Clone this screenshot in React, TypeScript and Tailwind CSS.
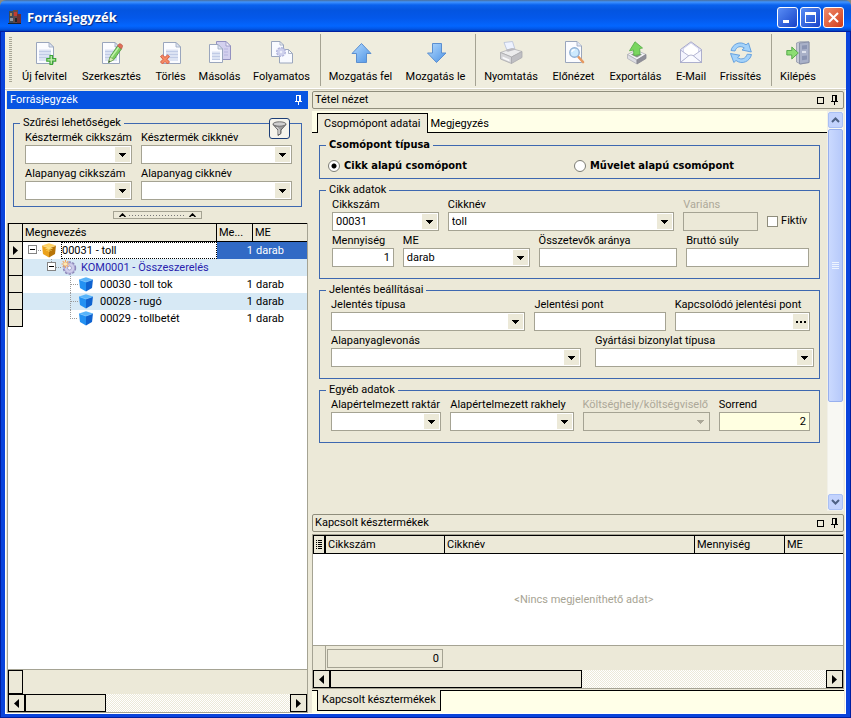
import { useId, type ReactNode } from "react";

/* ---------- small glyphs ---------- */

function PinIcon() {
  return (
    <svg width="7" height="10" viewBox="0 0 7 10" shapeRendering="crispEdges" aria-hidden="true">
      <path d="M1 0h5v6h1v1h-3v3h-1v-3h-3v-1h1zM2 1v5h2v-5z" fill="currentColor" fillRule="evenodd" />
    </svg>
  );
}

function SquareIcon() {
  return (
    <svg width="7" height="7" viewBox="0 0 7 7" shapeRendering="crispEdges" aria-hidden="true">
      <path d="M.5 .5h6v6h-6z" fill="none" stroke="currentColor" />
    </svg>
  );
}

function DownArrow() {
  return (
    <svg width="7" height="4" viewBox="0 0 7 4" shapeRendering="crispEdges" aria-hidden="true">
      <path d="M0 0h7v1h-1v1h-1v1h-1v1h-1v-1h-1v-1h-1v-1h-1z" fill="currentColor" />
    </svg>
  );
}

function SideArrow({ left = false }: { left?: boolean }) {
  return (
    <svg width="5" height="9" viewBox="0 0 5 9" aria-hidden="true">
      <path d={left ? "M5 0v9L0 4.500z" : "M0 0v9L5 4.500z"} fill="#000" />
    </svg>
  );
}

/* ---------- toolbar icons ---------- */

function Page({ x = 3, y = 1, w = 17, h = 22 }: { x?: number; y?: number; w?: number; h?: number }) {
  return (
    <g transform={`translate(${x} ${y})`}>
      <path d={`M.5 .5H${w - 5}L${w - 0.5} 5V${h - 0.5}H.5z`} fill="#fbfcff" stroke="#9aa6bd" />
      <path d={`M${w - 5} .5V5H${w - 0.5}z`} fill="#dfe6f5" stroke="#9aa6bd" strokeWidth=".8" />
      <path d={`M3 7.500H${w - 3}V${h - 3}H3z`} fill="#dce3f3" />
      <path d={`M3 9.500H${w - 3}M3 12.500H${w - 3}M3 15.500H${w - 3}`} stroke="#b9c5e2" strokeWidth=".8" />
    </g>
  );
}

function Icon({ children }: { children: ReactNode }) {
  return (
    <svg width="24" height="24" viewBox="0 0 24 24" aria-hidden="true">
      {children}
    </svg>
  );
}

const NewIcon = () => (
  <Icon>
    <Page x={3} y={1} w={18} h={22} />
    <path d="M17 14.500h2.500v3.200h3.200v2.500h-3.200v3.200H17v-3.200h-3.200v-2.500H17z" fill="#c9f0b4" stroke="#3fa636" strokeWidth="1.200" />
  </Icon>
);
const EditIcon = () => (
  <Icon>
    <Page x={2} y={1} w={18} h={22} />
    <path d="M8.500 21.500l1.500-5.500L17.500 5l4 2.800L14 18.500z" fill="#7dcf62" stroke="#4f9a40" strokeWidth=".9" />
    <path d="M11.200 16.500L18.800 6" stroke="#c4f2ae" strokeWidth="1.400" />
    <path d="M17.500 5l1.500-2c1.200-1 4.200 1 3.500 2.500L21.500 7.800z" fill="#e0705a" stroke="#bb5544" strokeWidth=".7" />
    <path d="M8.500 21.500l1.500-5.500 4 2.500z" fill="#d9efb4" stroke="#6f9a50" strokeWidth=".6" />
    <path d="M8.500 21.500l.6-1.900 1.200 1z" fill="#333" />
  </Icon>
);
const DeleteIcon = () => (
  <Icon>
    <Page x={4} y={1} w={18} h={22} />
    <path d="M1.500 15.500l2-1.500 2.500 2.300 2.500-2.300 2 1.500-2.500 2.800 2.500 2.700-2 2L6 20.500 3.500 23l-2-2L4 18.300z" fill="#f58a63" stroke="#d2513a" strokeWidth=".9" />
  </Icon>
);
const CopyIcon = () => (
  <Icon>
    <path d="M8.500 .5H18L22.500 5V18.500H8.500z" fill="#d3d0ee" stroke="#9391c0" />
    <path d="M18 .5V5H22.500z" fill="#f3f2fb" stroke="#9391c0" strokeWidth=".8" />
    <path d="M16 8h4M16 11h4M16 14h4" stroke="#b6b3de" />
    <Page x={1} y={3} w={14} h={19} />
  </Icon>
);
const FlowIcon = () => (
  <Icon>
    <path d="M1.500 .5H10L13.500 4V15.500H1.500z" fill="#f8faff" stroke="#9aa6bd" />
    <path d="M10 .5V4h3.500" fill="none" stroke="#9aa6bd" strokeWidth=".8" />
    <path d="M9.500 8.500H18.500L22.500 12.500V22H9.500z" fill="#f8faff" stroke="#9aa6bd" />
    <path d="M18.500 8.500v4h4" fill="none" stroke="#9aa6bd" strokeWidth=".8" />
    <circle cx="11" cy="11" r="4.200" fill="#cfd2ec" stroke="#b0b4dc" strokeWidth="1.600" strokeDasharray="2.200 1" />
    <circle cx="11" cy="11" r="3.600" fill="#cdd0ec" />
    <circle cx="11" cy="11" r="1.300" fill="#eef0fb" />
  </Icon>
);
const UpIcon = () => (
  <Icon>
    <defs>
      <linearGradient id="arrowBlue" x1="0" y1="0" x2="1" y2="1">
        <stop offset="0" stopColor="#b4dbff" />
        <stop offset="1" stopColor="#4c92e4" />
      </linearGradient>
    </defs>
    <path d="M12.500 2.500L22 12.500h-4.500v9h-10v-9H3z" fill="url(#arrowBlue)" stroke="#5b8fd0" />
  </Icon>
);
const DownIcon = () => (
  <Icon>
    <path d="M12.500 21.500L22 12h-4.500V2.500h-9V12H3.500z" fill="url(#arrowBlue)" stroke="#5b8fd0" />
  </Icon>
);
const PrintIcon = () => (
  <Icon>
    <path d="M5 1.500L13.500 .5l2.500 8-7.500 2z" fill="#eef3ff" stroke="#b6c0d8" strokeWidth=".8" />
    <path d="M1.500 11.500L13 7.500l10 3-10.500 5.500z" fill="#ececed" stroke="#b3b3b6" strokeWidth=".8" />
    <path d="M1.500 11.500L12.500 16v6.500L1.500 18z" fill="#d5d5d8" stroke="#a9a9ad" strokeWidth=".8" />
    <path d="M12.500 16L23 10.500v6l-10.500 6z" fill="#bfbfc3" stroke="#a9a9ad" strokeWidth=".8" />
    <path d="M3.500 15.500l7 3v2l-7-3z" fill="#f9f9fb" />
    <path d="M7 10l2 .8 7-2-.6-1.600-7.400 1z" fill="#b9b9bf" />
  </Icon>
);
const PreviewIcon = () => (
  <Icon>
    <path d="M3.500 .5H15L19.500 5V21.500H3.500z" fill="#fbfcff" stroke="#9aa6bd" />
    <path d="M15 .5V5h4.500" fill="#dfe6f5" stroke="#9aa6bd" strokeWidth=".8" />
    <path d="M16.500 16l4.500 5" stroke="#e59a62" strokeWidth="2.600" strokeLinecap="round" />
    <circle cx="12.500" cy="11.500" r="4.700" fill="#cdeafd" stroke="#8fb0d4" strokeWidth="1.400" />
    <path d="M9.800 11c.3-1.700 1.500-2.400 3-2.400" stroke="#fff" strokeWidth="1.200" fill="none" />
  </Icon>
);
const ExportIcon = () => (
  <Icon>
    <path d="M3.500 13.500L12 9l10 4.500-9 5.500z" fill="#f1f1f4" stroke="#b0b0b8" strokeWidth=".8" />
    <path d="M3.500 13.500L13 19v4L3.500 17.500z" fill="#dedee4" stroke="#b0b0b8" strokeWidth=".8" />
    <path d="M13 19l9-5.500v4L13 23z" fill="#8f8f98" stroke="#85858f" strokeWidth=".8" />
    <path d="M7 13.500l5-2.500 6 2.500-5 3z" fill="#8b9488" />
    <path d="M11 .8L18.500 7l-2.800.5.300 6-6 1-.5-5.500-4 .8z" fill="#7ad65f" stroke="#5bb24c" strokeWidth=".9" />
  </Icon>
);
const MailIcon = () => (
  <Icon>
    <path d="M1.500 8.500L12 .8l10.500 7.700v13h-21z" fill="#e6e8fa" stroke="#a5a7c8" />
    <path d="M4.500 7.500L12 2l7.500 5.500v5L12 16l-7.500-3.500z" fill="#fff" stroke="#c5c8e6" strokeWidth=".7" />
    <path d="M1.500 9l8.500 6-8.500 6.500zM22.500 9L14 15l8.500 6.500z" fill="#f4f5fe" stroke="#a5a7c8" strokeWidth=".8" />
    <path d="M1.500 21.500L10 14.500q2-1 4 0l8.500 7z" fill="#fafbff" stroke="#a5a7c8" strokeWidth=".8" />
  </Icon>
);
const RefreshIcon = () => (
  <Icon>
    <path d="M2 9.500C3.500 3 11 -.5 17 3.800L19.500 2l2.800 9-9.300-2 2.300-2C11.500 4.500 7.500 5.500 6 10z" fill="#a3d2fa" stroke="#5c9bdc" strokeWidth=".9" />
    <path d="M22.500 13.500C21 20.500 13 24 7 19.500L4.800 21.500 1.500 12.500l9.500 1.800-2.500 2.400C12.500 19 16.500 18 18.200 13.200z" fill="#a3d2fa" stroke="#5c9bdc" strokeWidth=".9" />
  </Icon>
);
const ExitIcon = () => (
  <Icon>
    <path d="M10.500 2L14 .8h9v20.700l-8.500 1.500-4-2z" fill="#c5c9d6" stroke="#9298ab" strokeWidth=".8" />
    <path d="M13.500 2L23 1v20.500L13.500 23z" fill="#a9b1c8" stroke="#8088a0" strokeWidth=".8" />
    <path d="M16 4.500l5-.5v4l-5 .5zM16 15l5-.5v4l-5 .7z" fill="#8a94b2" />
    <path d="M16 11h4" stroke="#f1f3f8" strokeWidth="1.500" />
    <path d="M.8 9.500h5V6l6.500 6-6.500 6v-4h-5z" fill="#8ddd74" stroke="#4fa545" strokeWidth=".9" />
  </Icon>
);

type Tool = { label: string; icon: () => ReactNode; width: string };

const toolGroups: Tool[][] = [
  [
    { label: "Új felvitel", icon: NewIcon, width: "w-[61px]" },
    { label: "Szerkesztés", icon: EditIcon, width: "w-[73px]" },
    { label: "Törlés", icon: DeleteIcon, width: "w-[45px]" },
    { label: "Másolás", icon: CopyIcon, width: "w-[53px]" },
    { label: "Folyamatos", icon: FlowIcon, width: "w-[71px]" },
  ],
  [
    { label: "Mozgatás fel", icon: UpIcon, width: "w-[77px]" },
    { label: "Mozgatás le", icon: DownIcon, width: "w-[73px]" },
  ],
  [
    { label: "Nyomtatás", icon: PrintIcon, width: "w-[68px]" },
    { label: "Előnézet", icon: PreviewIcon, width: "w-[57px]" },
    { label: "Exportálás", icon: ExportIcon, width: "w-[67px]" },
    { label: "E-Mail", icon: MailIcon, width: "w-[44px]" },
    { label: "Frissítés", icon: RefreshIcon, width: "w-[55px]" },
  ],
  [{ label: "Kilépés", icon: ExitIcon, width: "w-[50px]" }],
];

function Toolbar() {
  return (
    <div className="flex h-[58px] items-stretch border-b border-white bg-[#efedde] pl-[4px]">
      <div className="my-[6px] mr-[2px] w-[3px] bg-[repeating-linear-gradient(to_bottom,#a9a796_0px,#a9a796_1px,#efedde_1px,#efedde_2px)]" />
      {toolGroups.map((group, g) => (
        <div key={g} className="flex">
          {g > 0 && <div className="mt-[3px] mr-px mb-[2px] ml-[3px] w-px bg-[#a5a393]" />}
          {group.map(({ label, icon: Glyph, width }) => (
            <button key={label} type="button" className={`flex shrink-0 flex-col items-center whitespace-nowrap pt-[10px] ${width}`}>
              <Glyph />
              <span className="mt-[5px] leading-[14px]">{label}</span>
            </button>
          ))}
        </div>
      ))}
    </div>
  );
}

/* ---------- form parts ---------- */

const boxBase = "block h-[19px] w-full rounded-none border border-[#a5a393] px-[3px] leading-[17px] outline-none";

function Field({ label, size, disabled = false, children }: { label: string; size: string; disabled?: boolean; children: (id: string) => ReactNode }) {
  const id = useId();
  return (
    <div className={`min-w-0 ${size}`}>
      <label htmlFor={id} className={`block h-[14px] whitespace-nowrap leading-[13px] ${disabled ? "text-[#aca899]" : ""}`}>
        {label}
      </label>
      {children(id)}
    </div>
  );
}

function SelectField({ label, size, value = "", disabled = false }: { label: string; size: string; value?: string; disabled?: boolean }) {
  return (
    <Field label={label} size={size} disabled={disabled}>
      {(id) => (
        <div className="relative">
          <select id={id} disabled={disabled} defaultValue={value} className={`${boxBase} appearance-none opacity-100 ${disabled ? "bg-[#ece9d8]" : "bg-white"}`}>
            <option value={value}>{value}</option>
          </select>
          <span className={`pointer-events-none absolute top-[2px] right-[2px] flex h-[15px] w-[15px] items-center justify-center bg-[#ece9d8] ${disabled ? "text-[#aca899]" : "text-black"}`}>
            <DownArrow />
          </span>
        </div>
      )}
    </Field>
  );
}

function TextField({ label, size, value = "", look = "bg-white", disabled = false }: { label: string; size: string; value?: string; look?: string; disabled?: boolean }) {
  return (
    <Field label={label} size={size} disabled={disabled}>
      {(id) => <input id={id} type="text" disabled={disabled} defaultValue={value} className={`${boxBase} ${look}`} />}
    </Field>
  );
}

function Group({ title, children, className = "", bold = false }: { title: string; children: ReactNode; className?: string; bold?: boolean }) {
  return (
    <fieldset className={`relative min-w-0 border border-[#3e68b0] ${className}`}>
      <legend className={`ml-[6px] h-[14px] px-[3px] leading-[14px] ${bold ? "font-['DejaVu_Sans_Condensed','DejaVu_Sans',sans-serif] font-bold" : ""}`}>{title}</legend>
      {children}
    </fieldset>
  );
}

function PanelHeader({ title }: { title: string }) {
  return (
    <header className="flex h-[18px] shrink-0 items-center rounded-[2px] border border-[#8f8d7c] pr-[5px] pl-[2px]">
      <h2 className="flex-1 leading-[14px]">{title}</h2>
      <button type="button" aria-label="Teljes méret" className="mr-[7px]"><SquareIcon /></button>
      <button type="button" aria-label="Rögzítés"><PinIcon /></button>
    </header>
  );
}

function HScroll({ thumb }: { thumb: string }) {
  return (
    <div className="flex h-[18px] shrink-0 bg-[repeating-conic-gradient(#ece9d8_0%_25%,#ffffff_0%_50%)] bg-[length:2px_2px]">
      <button type="button" aria-label="Balra" className="flex w-[17px] items-center justify-center border border-black bg-[#ece9d8]"><SideArrow left /></button>
      <div className={`border border-black bg-[#ece9d8] ${thumb}`} />
      <div className="flex-1" />
      <button type="button" aria-label="Jobbra" className="flex w-[17px] items-center justify-center border border-black bg-[#ece9d8]"><SideArrow /></button>
    </div>
  );
}

/* ---------- tree ---------- */

function Cube({ gold = false }: { gold?: boolean }) {
  return (
    <svg width="16" height="16" viewBox="0 0 16 16" className="shrink-0" aria-hidden="true">
      <path d="M1 2.500L8 .3l7 2.200L8 5z" fill={gold ? "#ffd060" : "#58b4fa"} />
      <path d="M1 2.500L8 5v9.500L2 11z" fill={gold ? "#eba21c" : "#2391f2"} />
      <path d="M15 2.500L8 5v9.500l6-3.500z" fill={gold ? "#b87408" : "#0f63d0"} />
      <path d="M1 2.500L8 5l7-2.500" stroke={gold ? "#fbe0a0" : "#7cc6ff"} strokeWidth=".7" fill="none" />
      {gold && <path d="M8 2v7M4.500 5.500h7M5.500 3l5 5M10.500 3l-5 5" stroke="#ffe27a" strokeWidth=".8" />}
    </svg>
  );
}

function GearIcon() {
  return (
    <svg width="16" height="16" viewBox="0 0 16 16" className="shrink-0" aria-hidden="true">
      <circle cx="8.500" cy="8" r="5.700" fill="#c9c8e8" stroke="#8c87b8" strokeWidth="2" strokeDasharray="2.400 1.200" />
      <circle cx="8.500" cy="8" r="5.200" fill="#cfcdea" stroke="#a29fd0" strokeWidth=".7" />
      <circle cx="8.500" cy="8" r="2" fill="#f7f7fd" stroke="#8e8fc0" strokeWidth=".7" />
      <path d="M4.500 0v8M.5 4h8M1.700 1.200l5.600 5.600M7.300 1.200L1.700 6.800" stroke="#f0a860" strokeWidth="1.100" />
      <circle cx="4.500" cy="4" r="1.800" fill="#ffe9b0" />
    </svg>
  );
}

function Branch({ level, last = false }: { level: number; last?: boolean }) {
  const width = [18, 38, 55][level];
  const lines = ["M15 8.500h3", "M28.500 0v3M33 8.500h5", last ? "M47.500 0v8.500h8" : "M47.500 0v17M47.500 8.500h8"][level];
  const box = [5, 24, -1][level];
  return (
    <svg width={width} height="17" viewBox={`0 0 ${width} 17`} className="shrink-0" shapeRendering="crispEdges" aria-hidden="true">
      <path d={lines} stroke="#9a9a9a" strokeDasharray="1 1" fill="none" />
      {box >= 0 && (
        <g>
          <path d={`M${box + 0.5} 3.500h8v8h-8z`} fill="#fff" stroke="#848484" />
          <path d={`M${box + 2} 7.500h5`} stroke="#000" />
        </g>
      )}
    </svg>
  );
}

const rows = [
  { level: 0, name: "00031 - toll", qty: "1", unit: "darab" },
  { level: 1, name: "KOM0001 - Összeszerelés", qty: "", unit: "" },
  { level: 2, name: "00030 - toll tok", qty: "1", unit: "darab" },
  { level: 2, name: "00028 - rugó", qty: "1", unit: "darab" },
  { level: 2, name: "00029 - tollbetét", qty: "1", unit: "darab" },
];

function TreeGrid() {
  const head = "h-[19px] border-b border-r border-t border-black bg-[#ece9d8] px-[2px] text-left font-normal leading-[16px]";
  return (
    <div className="flex flex-1 flex-col border-x border-b border-[#a5a393] bg-white">
      <table className="w-full table-fixed border-separate border-spacing-0">
        <colgroup>
          <col className="w-[15px]" />
          <col />
          <col className="w-[36px]" />
          <col className="w-[54px]" />
        </colgroup>
        <thead>
          <tr>
            <th className={`${head} border-l`} aria-label="Jelölő" />
            <th className={head}>Megnevezés</th>
            <th className={head}>Me...</th>
            <th className="h-[19px] border-y border-black bg-[#ece9d8] px-[2px] text-left font-normal leading-[16px]">ME</th>
          </tr>
        </thead>
        <tbody>
          {rows.map((r, i) => {
            const tint = i === 0 ? "bg-[#316ac5] text-white" : i % 2 ? "bg-[#d7e9f5]" : "";
            return (
              <tr key={r.name} className={`h-[17px] leading-[17px] ${i % 2 ? "bg-[#d7e9f5]" : ""}`}>
                <td className="h-[17px] border-r border-b border-l border-black bg-[#ece9d8] p-0">
                  {i === 0 && <span className="flex justify-center"><SideArrow /></span>}
                </td>
                <td className="h-[17px] p-0">
                  <div className="flex h-[17px] items-center">
                    <Branch level={r.level} last={i === rows.length - 1} />
                    {r.level === 1 ? <GearIcon /> : <Cube gold={r.level === 0} />}
                    {r.level === 0 ? (
                      <span className="ml-[4px] h-[17px] flex-1 border border-dotted border-black leading-[16px]">{r.name}</span>
                    ) : (
                      <span className={r.level === 1 ? "ml-[4px] whitespace-nowrap text-[#2a1fae]" : "ml-[6px] whitespace-nowrap"}>{r.name}</span>
                    )}
                  </div>
                </td>
                <td className={`p-0 text-right ${tint}`}>{r.qty}</td>
                <td className={`p-0 pl-[3px] ${tint}`}>{r.unit}</td>
              </tr>
            );
          })}
        </tbody>
      </table>
      <div className="flex-1" />
      <div className="flex h-[25px] border-t border-[#a5a393] bg-[#ece9d8]">
        <div className="w-[15px] border border-black" />
      </div>
      <HScroll thumb="w-[81px]" />
    </div>
  );
}

function LeftPanel() {
  return (
    <aside className="flex w-[301px] shrink-0 flex-col">
      <header className="flex h-[18px] items-center bg-[#0855e2] pr-[6px] pl-[3px] text-white">
        <h2 className="flex-1 leading-[14px]">Forrásjegyzék</h2>
        <button type="button" aria-label="Rögzítés"><PinIcon /></button>
      </header>
      <Group title="Szűrési lehetőségek" className="mx-[6px] mt-[7px] pb-[6px]">
        <div className="flex flex-col gap-[3px] pt-px pr-[9px] pl-[11px]">
          <div className="flex gap-[9px]">
            <SelectField label="Késztermék cikkszám" size="flex-107" />
            <SelectField label="Késztermék cikknév" size="flex-151" />
          </div>
          <div className="flex gap-[9px]">
            <SelectField label="Alapanyag cikkszám" size="flex-107" />
            <SelectField label="Alapanyag cikknév" size="flex-151" />
          </div>
        </div>
        <button type="button" aria-label="Szűrés" className="absolute -top-[12px] right-[11px] flex h-[21px] w-[21px] items-center justify-center rounded-[3px] border border-[#1d3f77] bg-[#f5f4ec]">
          <svg width="15" height="15" viewBox="0 0 15 15" aria-hidden="true">
            <path d="M1 3.500L6 9v5.500l3-2V9l5-5.500z" fill="#9c9c9c" stroke="#555" strokeWidth=".9" />
            <path d="M7 8.500V13M4.500 6l2.500 2.500" stroke="#f4f4f4" />
            <ellipse cx="7.500" cy="3" rx="6.500" ry="2.200" fill="#cfcfcf" stroke="#666" strokeWidth=".9" />
          </svg>
        </button>
      </Group>
      <button type="button" aria-label="Szűrőpanel összecsukása" className="mx-auto my-[4px] flex h-[8px] w-[89px] items-center justify-between border border-[#a5a393] px-[5px]">
        <svg width="7" height="4" viewBox="0 0 7 4" aria-hidden="true"><path d="M.5 4L3.500 1l3 3" fill="none" stroke="#000" strokeWidth="1.500" /></svg>
        <span className="mx-[3px] h-px flex-1 bg-[repeating-linear-gradient(to_right,#777_0px,#777_1px,#ece9d8_1px,#ece9d8_3px)]" />
        <svg width="7" height="4" viewBox="0 0 7 4" aria-hidden="true"><path d="M.5 4L3.500 1l3 3" fill="none" stroke="#000" strokeWidth="1.500" /></svg>
      </button>
      <TreeGrid />
    </aside>
  );
}

/* ---------- right side ---------- */

function VScroll() {
  const btn = "flex h-[16px] items-center justify-center rounded-[2px] border border-[#a9c0f5] bg-[#c3d3fd]";
  return (
    <div className="flex w-[17px] shrink-0 flex-col border border-[#f1f0e8] bg-[#f8f8f3]">
      <button type="button" aria-label="Fel" className={btn}>
        <svg width="9" height="6" viewBox="0 0 9 6" aria-hidden="true"><path d="M1 5l3.500-3.500L8 5" fill="none" stroke="#4d6185" strokeWidth="2" /></svg>
      </button>
      <div className="mt-px flex flex-[272] flex-col items-center justify-center gap-px rounded-[2px] border border-[#98b0ee] bg-linear-to-r from-[#cad9fe] to-[#b6c9fa]">
        <i className="h-px w-[7px] bg-[#eef4fe]" />
        <i className="h-px w-[7px] bg-[#eef4fe]" />
        <i className="h-px w-[7px] bg-[#eef4fe]" />
        <i className="h-px w-[7px] bg-[#eef4fe]" />
      </div>
      <div className="flex-[93]" />
      <button type="button" aria-label="Le" className={btn}>
        <svg width="9" height="6" viewBox="0 0 9 6" aria-hidden="true"><path d="M1 1l3.500 3.500L8 1" fill="none" stroke="#4d6185" strokeWidth="2" /></svg>
      </button>
    </div>
  );
}

function ItemForm() {
  const row = "flex gap-[9px]";
  const radio = "relative h-[12px] w-[12px] appearance-none rounded-full border border-[#7c7c74] bg-white checked:bg-[radial-gradient(circle,#000_2px,#fff_3px)]";
  return (
    <form className="flex flex-col gap-[4px] pt-[5px] pr-[7px] pl-[7px]">
      <Group title="Csomópont típusa" bold>
        <div className="flex h-[26px] items-center pt-[2px] pl-[8px] font-['DejaVu_Sans_Condensed','DejaVu_Sans',sans-serif] font-bold">
          <label className="flex w-[246px] items-center gap-[4px]">
            <input type="radio" name="kind" defaultChecked className={radio} />
            Cikk alapú csomópont
          </label>
          <label className="flex items-center gap-[4px]">
            <input type="radio" name="kind" className={radio} />
            Művelet alapú csomópont
          </label>
        </div>
      </Group>
      <Group title="Cikk adatok">
        <div className="flex flex-col gap-[3px] pt-px pr-[10px] pb-[11px] pl-[12px]">
          <div className={row}>
            <SelectField label="Cikkszám" size="flex-107" value="00031" />
            <SelectField label="Cikknév" size="flex-227" value="toll" />
            <TextField label="Variáns" size="flex-75" look="bg-[#ece9d8]" disabled />
            <label className="mt-[14px] flex flex-42 items-center gap-[3px]">
              <input type="checkbox" className="h-[11px] w-[11px] shrink-0 appearance-none border border-[#8f8d7c] bg-white" />
              Fiktív
            </label>
          </div>
          <div className={row}>
            <TextField label="Mennyiség" size="flex-62" value="1" look="bg-white text-right" />
            <SelectField label="ME" size="flex-127" value="darab" />
            <TextField label="Összetevők aránya" size="flex-139" />
            <TextField label="Bruttó súly" size="flex-123" />
          </div>
        </div>
      </Group>
      <Group title="Jelentés beállításai">
        <div className="flex flex-col gap-[3px] pt-px pr-[5px] pb-[11px] pl-[11px]">
          <div className={`${row} pr-[4px]`}>
            <SelectField label="Jelentés típusa" size="flex-194" />
            <TextField label="Jelentési pont" size="flex-131" />
            <Field label="Kapcsolódó jelentési pont" size="flex-135">
              {(id) => (
                <div className="relative">
                  <input id={id} type="text" className={`${boxBase} bg-white`} />
                  <button type="button" aria-label="Tallózás" className="absolute top-[2px] right-[2px] flex h-[15px] w-[15px] items-center justify-center gap-[2px] bg-[#ece9d8]">
                    <i className="h-[2px] w-[2px] bg-black" />
                    <i className="h-[2px] w-[2px] bg-black" />
                    <i className="h-[2px] w-[2px] bg-black" />
                  </button>
                </div>
              )}
            </Field>
          </div>
          <div className="flex gap-[14px]">
            <SelectField label="Alapanyaglevonás" size="flex-250" />
            <SelectField label="Gyártási bizonylat típusa" size="flex-219" />
          </div>
        </div>
      </Group>
      <Group title="Egyéb adatok">
        <div className={`${row} pt-px pr-[9px] pb-[11px] pl-[11px]`}>
          <SelectField label="Alapértelmezett raktár" size="flex-110" />
          <SelectField label="Alapértelmezett rakhely" size="flex-123" />
          <SelectField label="Költséghely/költségviselő" size="flex-127" disabled />
          <TextField label="Sorrend" size="flex-91" value="2" look="bg-[#ffffe1] text-right" />
        </div>
      </Group>
    </form>
  );
}

function LinkedProducts() {
  const head = "border-y border-r border-black px-[2px] text-left font-normal leading-[17px]";
  return (
    <section className="flex shrink-0 flex-col">
      <PanelHeader title="Kapcsolt késztermékek" />
      <div className="mt-[2px] border border-[#a5a393] bg-white">
        <table className="w-full table-fixed border-separate border-spacing-0">
          <colgroup>
            <col className="w-[13px]" />
            <col className="w-[119px]" />
            <col />
            <col className="w-[90px]" />
            <col className="w-[58px]" />
          </colgroup>
          <thead>
            <tr className="h-[19px] bg-[#ece9d8]">
              <th className="border border-r-2 border-black p-0" aria-label="Oszlopok">
                <svg width="7" height="9" viewBox="0 0 7 9" className="mx-auto" shapeRendering="crispEdges" aria-hidden="true">
                  <path d="M0 .5h1M2 .5h4M0 2.500h1M2 2.500h4M0 4.500h1M2 4.500h4M0 6.500h1M2 6.500h4M0 8.500h1M2 8.500h4" stroke="#000" />
                </svg>
              </th>
              <th className={head}>Cikkszám</th>
              <th className={head}>Cikknév</th>
              <th className={head}>Mennyiség</th>
              <th className="border-y border-black px-[2px] text-left font-normal leading-[17px]">ME</th>
            </tr>
          </thead>
          <tbody>
            <tr>
              <td colSpan={5} className="h-[91px] p-0 pt-[2px] pl-[12px] text-center text-[#a7a494]">&lt;Nincs megjeleníthető adat&gt;</td>
            </tr>
          </tbody>
          <tfoot>
            <tr className="bg-[#ece9d8]">
              <td className="h-[25px] border-t border-r border-[#a5a393] p-0" />
              <td colSpan={4} className="h-[25px] border-t border-[#a5a393] p-0">
                <div className="ml-[1px] h-[19px] w-[116px] border border-[#a5a393] pr-[3px] text-right leading-[18px]">0</div>
              </td>
            </tr>
          </tfoot>
        </table>
        <HScroll thumb="w-[252px]" />
      </div>
      <div className="mt-px flex h-[23px] border-t border-black bg-[#ffffe8] pl-[5px]">
        <button type="button" className="-mt-px h-[21px] border border-t-0 border-black bg-[#ece9d8] px-[4px] leading-[20px] whitespace-nowrap">Kapcsolt késztermékek</button>
      </div>
    </section>
  );
}

function TitleBar() {
  const btn = "flex h-[21px] w-[21px] items-center justify-center rounded-[3px] border border-white";
  return (
    <header className="flex h-[31px] shrink-0 items-center rounded-t-[6px] bg-[linear-gradient(to_bottom,#4a6f9c_0px,#3f93ff_2px,#0a62ee_5px,#0455e0_10px,#0458ea_18px,#0366ff_26px,#0256e6_29px,#003fb8_31px)] pr-[7px] pl-[7px] pt-[3px]">
      <svg width="15" height="16" viewBox="0 0 15 16" aria-hidden="true">
        <path d="M2 2h4v12H2z" fill="#3b4a5a" />
        <path d="M6 1h5v13H6z" fill="#5f4a4a" />
        <path d="M3 4h2v3H3z" fill="#b08a50" />
        <path d="M7 3h3v4H7z" fill="#c23b30" />
        <path d="M10 5h4v9h-4z" fill="#6d2f33" />
        <path d="M3 9h3v3H3z" fill="#8f98a3" />
        <path d="M8 9h2v4H8z" fill="#20242c" />
        <path d="M1 14h13v1H1z" fill="#14202e" />
      </svg>
      <h1 className="ml-[5px] flex-1 pt-px font-['Open_Sans','Noto_Sans',sans-serif] text-[13px] font-bold text-white [text-shadow:1px_1px_1px_#0a2a80]">Forrásjegyzék</h1>
      <div className="flex gap-[2px]">
        <button type="button" aria-label="Kis méret" className={`${btn} bg-linear-to-br from-[#5a8df5] to-[#1941c8]`}>
          <svg width="13" height="13" viewBox="0 0 13 13"><path d="M2 9h6v3H2z" fill="#fff" /></svg>
        </button>
        <button type="button" aria-label="Teljes méret" className={`${btn} bg-linear-to-br from-[#5a8df5] to-[#1941c8]`}>
          <svg width="13" height="13" viewBox="0 0 13 13" shapeRendering="crispEdges"><path d="M1.500 2.500h10v9h-10zM1 1.500h11M1 3.500h11" fill="none" stroke="#fff" /></svg>
        </button>
        <button type="button" aria-label="Bezárás" className={`${btn} bg-linear-to-br from-[#f08a6a] to-[#cf3a12]`}>
          <svg width="13" height="13" viewBox="0 0 13 13"><path d="M2 2l9 9M11 2l-9 9" stroke="#fff" strokeWidth="2" /></svg>
        </button>
      </div>
    </header>
  );
}

export default function App() {
  return (
    <div className="flex min-h-screen flex-col bg-[#8a8a80] font-['Roboto','Noto_Sans',sans-serif] text-[11px] text-black">
      <TitleBar />
      <div className="flex flex-1 flex-col border-x-[5px] border-b-[4px] border-[#0a44dc] bg-[#ece9d8] shadow-[inset_0_0_0_1px_#ffffff] outline outline-1 -outline-offset-1 outline-[#001ea0]">
        <Toolbar />
        <main className="flex flex-1 gap-[4px] border-t border-[#d5d2c0] pt-px pr-[2px] pb-px pl-[2px]">
          <LeftPanel />
          <div className="flex min-w-0 flex-1 flex-col">
            <PanelHeader title="Tétel nézet" />
            <div className="mt-[2px] mb-[3px] flex flex-1">
              <div className="flex min-w-0 flex-1 flex-col">
                <div className="flex h-[22px] shrink-0 items-end border-b border-black bg-[#ffffe8] pl-[5px]">
                  <button type="button" className="-mb-px h-[20px] border border-b-0 border-black bg-[#ece9d8] px-[6px] leading-[20px] whitespace-nowrap">Csopmópont adatai</button>
                  <button type="button" className="h-[19px] px-[3px] leading-[21px]">Megjegyzés</button>
                </div>
                <ItemForm />
              </div>
              <VScroll />
            </div>
            <LinkedProducts />
          </div>
        </main>
      </div>
    </div>
  );
}
